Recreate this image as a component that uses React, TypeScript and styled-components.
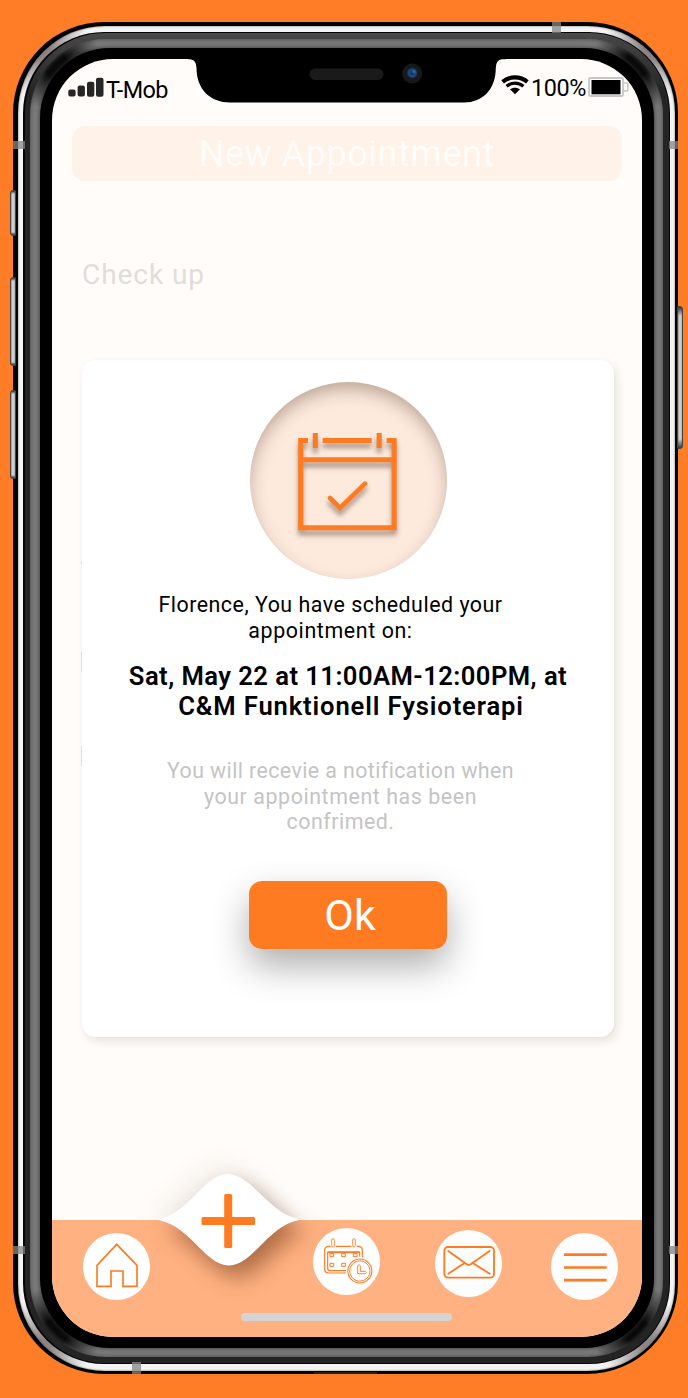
import React from "react";
import styled, { createGlobalStyle } from "styled-components";

const ORANGE = "#ff7b22";

const GlobalStyle = createGlobalStyle`
  * { box-sizing: border-box; }
  body { margin: 0; background: #ff7d27; font-family: Roboto, "Liberation Sans", sans-serif; }
  svg { display: block; flex: none; }
`;

const Page = styled.main`
  position: relative;
  width: 688px;
  height: 1398px;
  padding: 22px 10px 24px 13px;
  background: #ff7d27;
  overflow: hidden;
`;

const Shell = styled.div`
  height: 1352px;
  padding: 3.5px 3px 3px 5px;
  border-radius: 91px;
  background: #000;
`;

const Steel = styled.div`
  height: 100%;
  padding: 6.5px 5px 7px 5px;
  border-radius: 87px;
  background:
    radial-gradient(circle at 24px 24px, #8d8585 0 8px, transparent 48px),
    radial-gradient(circle at calc(100% - 24px) 24px, #8d8585 0 8px, transparent 48px),
    radial-gradient(circle at 24px calc(100% - 24px), #8d8585 0 8px, transparent 48px),
    radial-gradient(circle at calc(100% - 24px) calc(100% - 24px), #8d8585 0 8px, transparent 48px),
    #f4f4f4;
  box-shadow: inset 0 0 2px #555;
`;

const Seam = styled.div`
  height: 100%;
  padding: 1px 1.5px;
  border-radius: 81px;
  background: #050505;
`;

const Graphite = styled.div`
  height: 100%;
  padding: 6px 6px 6px 5px;
  border-radius: 80px;
  background: linear-gradient(#4b4b4b 0, #444 6px, #242424 60px);
`;

const Bevel = styled.div`
  height: 100%;
  padding: 9px 9px 9px 10px;
  border-radius: 76px;
  background:
    radial-gradient(circle at 26px 26px, #0a0a0a 0 12px, transparent 46px),
    radial-gradient(circle at calc(100% - 26px) 26px, #0a0a0a 0 12px, transparent 46px),
    radial-gradient(circle at 26px calc(100% - 26px), #0a0a0a 0 12px, transparent 46px),
    radial-gradient(circle at calc(100% - 26px) calc(100% - 26px), #0a0a0a 0 12px, transparent 46px),
    #7a7a7a;
  box-shadow: inset 0 0 4px #444;
`;

const Bezel = styled.div`
  height: 100%;
  padding: 11px 12px 11px 12.5px;
  border-radius: 70px;
  background: #000;
  box-shadow: 0 0 4px #333;
`;

const Screen = styled.div`
  position: relative;
  display: flex;
  flex-direction: column;
  height: 100%;
  border-radius: 61px;
  background: #fffcf9;
  overflow: hidden;
`;

const Notch = styled.svg`
  position: absolute;
  left: 136px;
  top: -1px;
`;

const StatusBar = styled.header`
  display: flex;
  justify-content: space-between;
  height: 67px;
  padding: 16px 12.5px 0 16px;
  font-size: 23.4px;
  line-height: 28px;
  color: #000;
`;

const StatusGroup = styled.div`
  display: flex;
  align-items: flex-start;
  gap: 2px;
`;

const StatusItem = styled.span<{ $top: number; $spacing?: number }>`
  margin-top: ${(p) => p.$top}px;
  letter-spacing: ${(p) => p.$spacing ?? 0}px;
`;

const TitleBar = styled.h1`
  flex: none;
  display: flex;
  justify-content: center;
  height: 55px;
  margin: 0 20px;
  padding-top: 1px;
  border-radius: 13px;
  background: #fff2e9;
  color: #fffcfa;
  font-size: 36px;
  font-weight: 400;
  line-height: 55px;
  letter-spacing: 0.55px;
`;

const Service = styled.p`
  flex: none;
  margin: 77px 30px 0;
  height: 102px;
  color: #e1dddb;
  font-size: 28px;
  line-height: 34px;
  letter-spacing: 0.95px;
`;

const Card = styled.section`
  position: relative;
  flex: none;
  display: flex;
  flex-direction: column;
  align-items: center;
  width: 532px;
  height: 677px;
  margin-left: 30px;
  padding-top: 22px;
  border-radius: 14px;
  background: #fff;
  box-shadow: 3px 4px 10px rgba(60, 30, 10, 0.12);
`;

const EdgeMark = styled.i<{ $y: number; $h: number }>`
  position: absolute;
  left: -1px;
  top: ${(p) => p.$y}px;
  width: 1px;
  height: ${(p) => p.$h}px;
  background: #dfdcda;
`;

const Medallion = styled.div`
  flex: none;
  display: grid;
  place-items: center;
  width: 197px;
  height: 197px;
  padding: 3px 1.5px 0 0;
  border-radius: 50%;
  background: #fdeadd;
  box-shadow: inset 0 8px 18px -2px rgba(50, 20, 0, 0.34);

  svg { filter: drop-shadow(0 5px 2.5px rgba(50, 25, 10, 0.42)); overflow: visible; }
`;

const Copy = styled.p<{ $shift: number; $top: number; $size: number; $leading: number; $weight?: number; $color?: string }>`
  flex: none;
  margin: ${(p) => p.$top}px 0 0;
  padding-right: ${(p) => p.$shift}px;
  color: ${(p) => p.$color ?? "#000"};
  font-size: ${(p) => p.$size}px;
  font-weight: ${(p) => p.$weight ?? 400};
  line-height: ${(p) => p.$leading}px;
  text-align: center;
  white-space: nowrap;
`;

const Line = styled.span<{ $spacing: number; $indent?: number }>`
  display: block;
  padding-left: ${(p) => p.$indent ?? 0}px;
  letter-spacing: ${(p) => p.$spacing}px;
`;

const OkButton = styled.button`
  flex: none;
  width: 198px;
  height: 68px;
  margin-top: 46px;
  padding: 0 0 0 4px;
  border: 0;
  border-radius: 13px;
  background: ${ORANGE};
  box-shadow: 0 17px 36px rgba(0, 0, 0, 0.32);
  color: #fff;
  font-family: inherit;
  font-size: 43px;
  line-height: 68px;
`;

const TabBar = styled.nav`
  display: flex;
  flex-direction: column;
  align-items: center;
  flex: none;
  height: 117px;
  margin-top: auto;
  background: #ffb181;
`;

const Tabs = styled.div`
  display: flex;
  align-items: flex-start;
  width: 100%;
  height: 92.5px;
  padding-left: 31px;
`;

const Tab = styled.a<{ $gap?: number; $drop: number; $tone?: string }>`
  flex: none;
  width: 67px;
  height: 67px;
  margin: ${(p) => p.$drop}px 0 0 ${(p) => p.$gap ?? 0}px;
  border-radius: 50%;
  background: ${(p) => p.$tone ?? "#fff"};
`;

const AddTab = styled.a`
  flex: none;
  width: 151px;
  height: 92px;
  margin: -46px 0 0 3px;

  svg { overflow: visible; }
  svg > path:first-child {
    filter: drop-shadow(9px 12px 11px rgba(80, 30, 0, 0.44)) drop-shadow(-7px -9px 12px rgba(80, 40, 20, 0.07));
  }
`;

const HomeIndicator = styled.div`
  width: 211px;
  height: 8.5px;
  border-radius: 5px;
  background: #d4d4d4;
`;

const SideButton = styled.i<{ $x: number; $y: number; $h: number; $right?: boolean }>`
  position: absolute;
  left: ${(p) => p.$x}px;
  top: ${(p) => p.$y}px;
  width: 6px;
  height: ${(p) => p.$h}px;
  border: 1px solid #444;
  border-radius: ${(p) => (p.$right ? "1px 3px 3px 1px" : "3px 1px 1px 3px")};
  background:
    linear-gradient(#333, transparent ${(p) => (p.$right ? 9 : 3)}px, transparent calc(100% - ${(p) => (p.$right ? 9 : 3)}px), #333),
    linear-gradient(90deg, #999, #ddd 50%, #aaa);
`;

const Antenna = styled.i<{ $x: number; $y: number; $w: number; $h: number }>`
  position: absolute;
  left: ${(p) => p.$x}px;
  top: ${(p) => p.$y}px;
  width: ${(p) => p.$w}px;
  height: ${(p) => p.$h}px;
  background: rgba(135, 135, 135, 0.75);
`;

const PortLip = styled.i`
  position: absolute;
  left: 314px;
  top: 1372px;
  width: 63px;
  height: 2px;
  background: #222;
`;

const SignalIcon = () => (
  <svg width="36" height="20" viewBox="0 0 36 20" fill="#262626">
    <rect x="0.3" y="12.5" width="7.3" height="7" rx="2" />
    <rect x="9.6" y="8.6" width="7.3" height="11" rx="2" />
    <rect x="19" y="4.7" width="7.3" height="15" rx="2" />
    <rect x="28" y="0.7" width="7.5" height="19" rx="2" />
  </svg>
);

const WifiIcon = () => (
  <svg width="28" height="20" viewBox="0 0 28 20" fill="none" stroke="#000">
    <path d="M1.600 6.800C8.800.9 19.200.9 26.400 6.800" strokeWidth="4.200" />
    <path d="M5.600 11.300c5-4.200 11.800-4.200 16.800 0" strokeWidth="3.300" />
    <path d="M14 19.300l-5-5c2.800-2.200 7.200-2.200 10 0z" fill="#000" stroke="none" />
  </svg>
);

const BatteryIcon = () => (
  <svg width="41" height="21" viewBox="0 0 41 21">
    <rect x="1" y="1" width="34" height="18" rx="1.5" fill="#fff" stroke="#c6c6c6" strokeWidth="1.8" />
    <path d="M35.5 6h3.3q1 0 1 1v6q0 1-1 1h-3.3" fill="none" stroke="#c6c6c6" strokeWidth="1.6" />
    <rect x="3.5" y="3" width="29" height="14.3" fill="#000" />
  </svg>
);

const CalendarCheck = () => (
  <svg width="99" height="98" viewBox="205 221 297 294" fill="none" stroke={ORANGE} strokeWidth="15">
    <path d="M235 243.500H213V505.500H493.500V243.500H471M279 243.500H426M213 301.500H493M257 221V266M448.500 221V266" />
    <path d="M301 416l30 30 75-73" strokeWidth="14" strokeLinecap="round" />
  </svg>
);

const HouseIcon = () => (
  <svg width="67" height="67" viewBox="249 277 201 201" fill="none" stroke={ORANGE} strokeWidth="5">
    <path d="M350 311L291 374V437H333V391H369V437H411V374Z" />
  </svg>
);

const ScheduleIcon = () => (
  <svg width="67" height="67" viewBox="39 144 201 201" fill="none" stroke={ORANGE} strokeWidth="3.500">
    <path d="M92 199H86Q74 199 74 211V267Q74 279 86 279H138M107 199H154M170 199H175Q187 199 187 211V232" />
    <path d="M138 272H90Q83 272 83 265V217H179V230" />
    <path d="M83 217H179" strokeWidth="6" />
    <rect x="95" y="176" width="8" height="25" rx="4" strokeWidth="2.500" />
    <rect x="158" y="176" width="8" height="25" rx="4" strokeWidth="2.500" />
    <path d="M90 221h11v9H90zM125 221h11v9h-11zM160 221h11v9h-11zM90 250h11v9H90zM125 250h11v9h-11z" strokeWidth="3" />
    <circle cx="179.500" cy="273" r="36" strokeWidth="3.200" />
    <circle cx="179.500" cy="273" r="30.500" strokeWidth="2.800" />
    <path d="M173 257Q177 251 181 257V274H196Q202 277 196 281H173Z" strokeWidth="2.800" />
  </svg>
);

const MailIcon = () => (
  <svg width="67" height="67" viewBox="407 150 201 201" fill="none" stroke={ORANGE} strokeWidth="5.500">
    <rect x="435" y="201" width="149" height="92" rx="11" />
    <path d="M447 213L501 252Q508 257 515 252L571 213M447 281L496 249M571 281L520 249" strokeLinecap="round" />
  </svg>
);

const MenuIcon = () => (
  <svg width="67" height="67" viewBox="753 157 201 201" stroke={ORANGE} strokeWidth="8">
    <path d="M792 222H920M792 260.500H920M792 298.500H920" />
  </svg>
);

const AddIcon = () => (
  <svg width="151" height="92" viewBox="153 1174 151 92">
    <path
      fill="#fff"
      d="M153 1219.500C188 1218 203 1174 227 1174C254 1174 270 1218 304 1219.500C270 1221 254 1265.500 229 1265.500C204 1265.500 188 1221 153 1219.500Z"
    />
    <rect x="201.500" y="1217" width="53.500" height="8" rx="1.500" fill={ORANGE} />
    <rect x="224.200" y="1194" width="8" height="54" rx="1.500" fill={ORANGE} />
  </svg>
);

const NotchShape = () => (
  <Notch width="318" height="46" viewBox="188 58 318 46">
    <defs>
      <radialGradient id="lens">
        <stop offset="0" stopColor="#123058" />
        <stop offset="0.6" stopColor="#1d4c85" />
        <stop offset="1" stopColor="#10131c" />
      </radialGradient>
    </defs>
    <path
      fill="#000"
      d="M188 58V59.200H190Q196.500 59.800 196.500 68C196.500 89 210 102.500 230 102.500H464C483 102.500 495.800 89 495.800 68Q495.800 59.800 502 59.200H506V58Z"
    />
    <rect x="309.500" y="68.500" width="74" height="11.500" rx="5.700" fill="#1a1a1a" />
    <circle cx="412.200" cy="73.500" r="10" fill="#191919" />
    <circle cx="412.200" cy="73" r="6" fill="url(#lens)" />
    <circle cx="414" cy="71.500" r="1.600" fill="#2a69a8" />
  </Notch>
);

export default function App() {
  return (
    <>
      <GlobalStyle />
      <Page>
        <SideButton $x={10} $y={190} $h={46} />
        <SideButton $x={10} $y={277} $h={89} />
        <SideButton $x={10} $y={390} $h={89} />
        <SideButton $x={677} $y={306} $h={143} $right />
        <Shell>
          <Steel>
            <Seam>
              <Graphite>
                <Bevel>
                  <Bezel>
                    <Screen>
                      <NotchShape />
                      <StatusBar>
                        <StatusGroup>
                          <StatusItem $top={2}><SignalIcon /></StatusItem>
                          <StatusItem $top={1} $spacing={-0.55}>T-Mob</StatusItem>
                        </StatusGroup>
                        <StatusGroup>
                          <WifiIcon />
                          <StatusItem $top={-1} $spacing={-0.4}>100%</StatusItem>
                          <StatusItem $top={2}><BatteryIcon /></StatusItem>
                        </StatusGroup>
                      </StatusBar>
                      <TitleBar>New Appointment</TitleBar>
                      <Service>Check up</Service>
                      <Card>
                        <EdgeMark $y={201} $h={3} />
                        <EdgeMark $y={292} $h={20} />
                        <EdgeMark $y={386} $h={20} />
                        <Medallion><CalendarCheck /></Medallion>
                        <Copy $top={13} $shift={35} $size={21.4} $leading={26}>
                          <Line $spacing={0.51}>Florence, You have scheduled your</Line>
                          <Line $spacing={0.6}>appointment on:</Line>
                        </Copy>
                        <Copy $top={17} $shift={0} $size={25.6} $leading={30} $weight={600}>
                          <Line $spacing={0.45}>Sat, May 22 at 11:00AM-12:00PM, at</Line>
                          <Line $spacing={0.87} $indent={6}>C&amp;M Funktionell Fysioterapi</Line>
                        </Copy>
                        <Copy $top={37} $shift={15} $size={21.4} $leading={25.7} $color="#c4c4c4">
                          <Line $spacing={0.4}>You will recevie a notification when</Line>
                          <Line $spacing={0.57}>your appointment has been</Line>
                          <Line $spacing={0.5}>confrimed.</Line>
                        </Copy>
                        <OkButton>Ok</OkButton>
                      </Card>
                      <TabBar>
                        <Tabs>
                          <Tab $drop={12.5}><HouseIcon /></Tab>
                          <AddTab><AddIcon /></AddTab>
                          <Tab $gap={9} $drop={8}><ScheduleIcon /></Tab>
                          <Tab $gap={55} $drop={10} $tone="#fdfdfd"><MailIcon /></Tab>
                          <Tab $gap={49} $drop={12.5} $tone="#fdfdfd"><MenuIcon /></Tab>
                        </Tabs>
                        <HomeIndicator />
                      </TabBar>
                    </Screen>
                  </Bezel>
                </Bevel>
              </Graphite>
            </Seam>
          </Steel>
        </Shell>
        <PortLip />
        <Antenna $x={13} $y={141} $w={12} $h={8} />
        <Antenna $x={669} $y={141} $w={9} $h={8} />
        <Antenna $x={552} $y={22} $w={9} $h={11} />
        <Antenna $x={13} $y={1246} $w={12} $h={8} />
        <Antenna $x={669} $y={1246} $w={9} $h={8} />
        <Antenna $x={132} $y={1362} $w={9} $h={12} />
      </Page>
    </>
  );
}
